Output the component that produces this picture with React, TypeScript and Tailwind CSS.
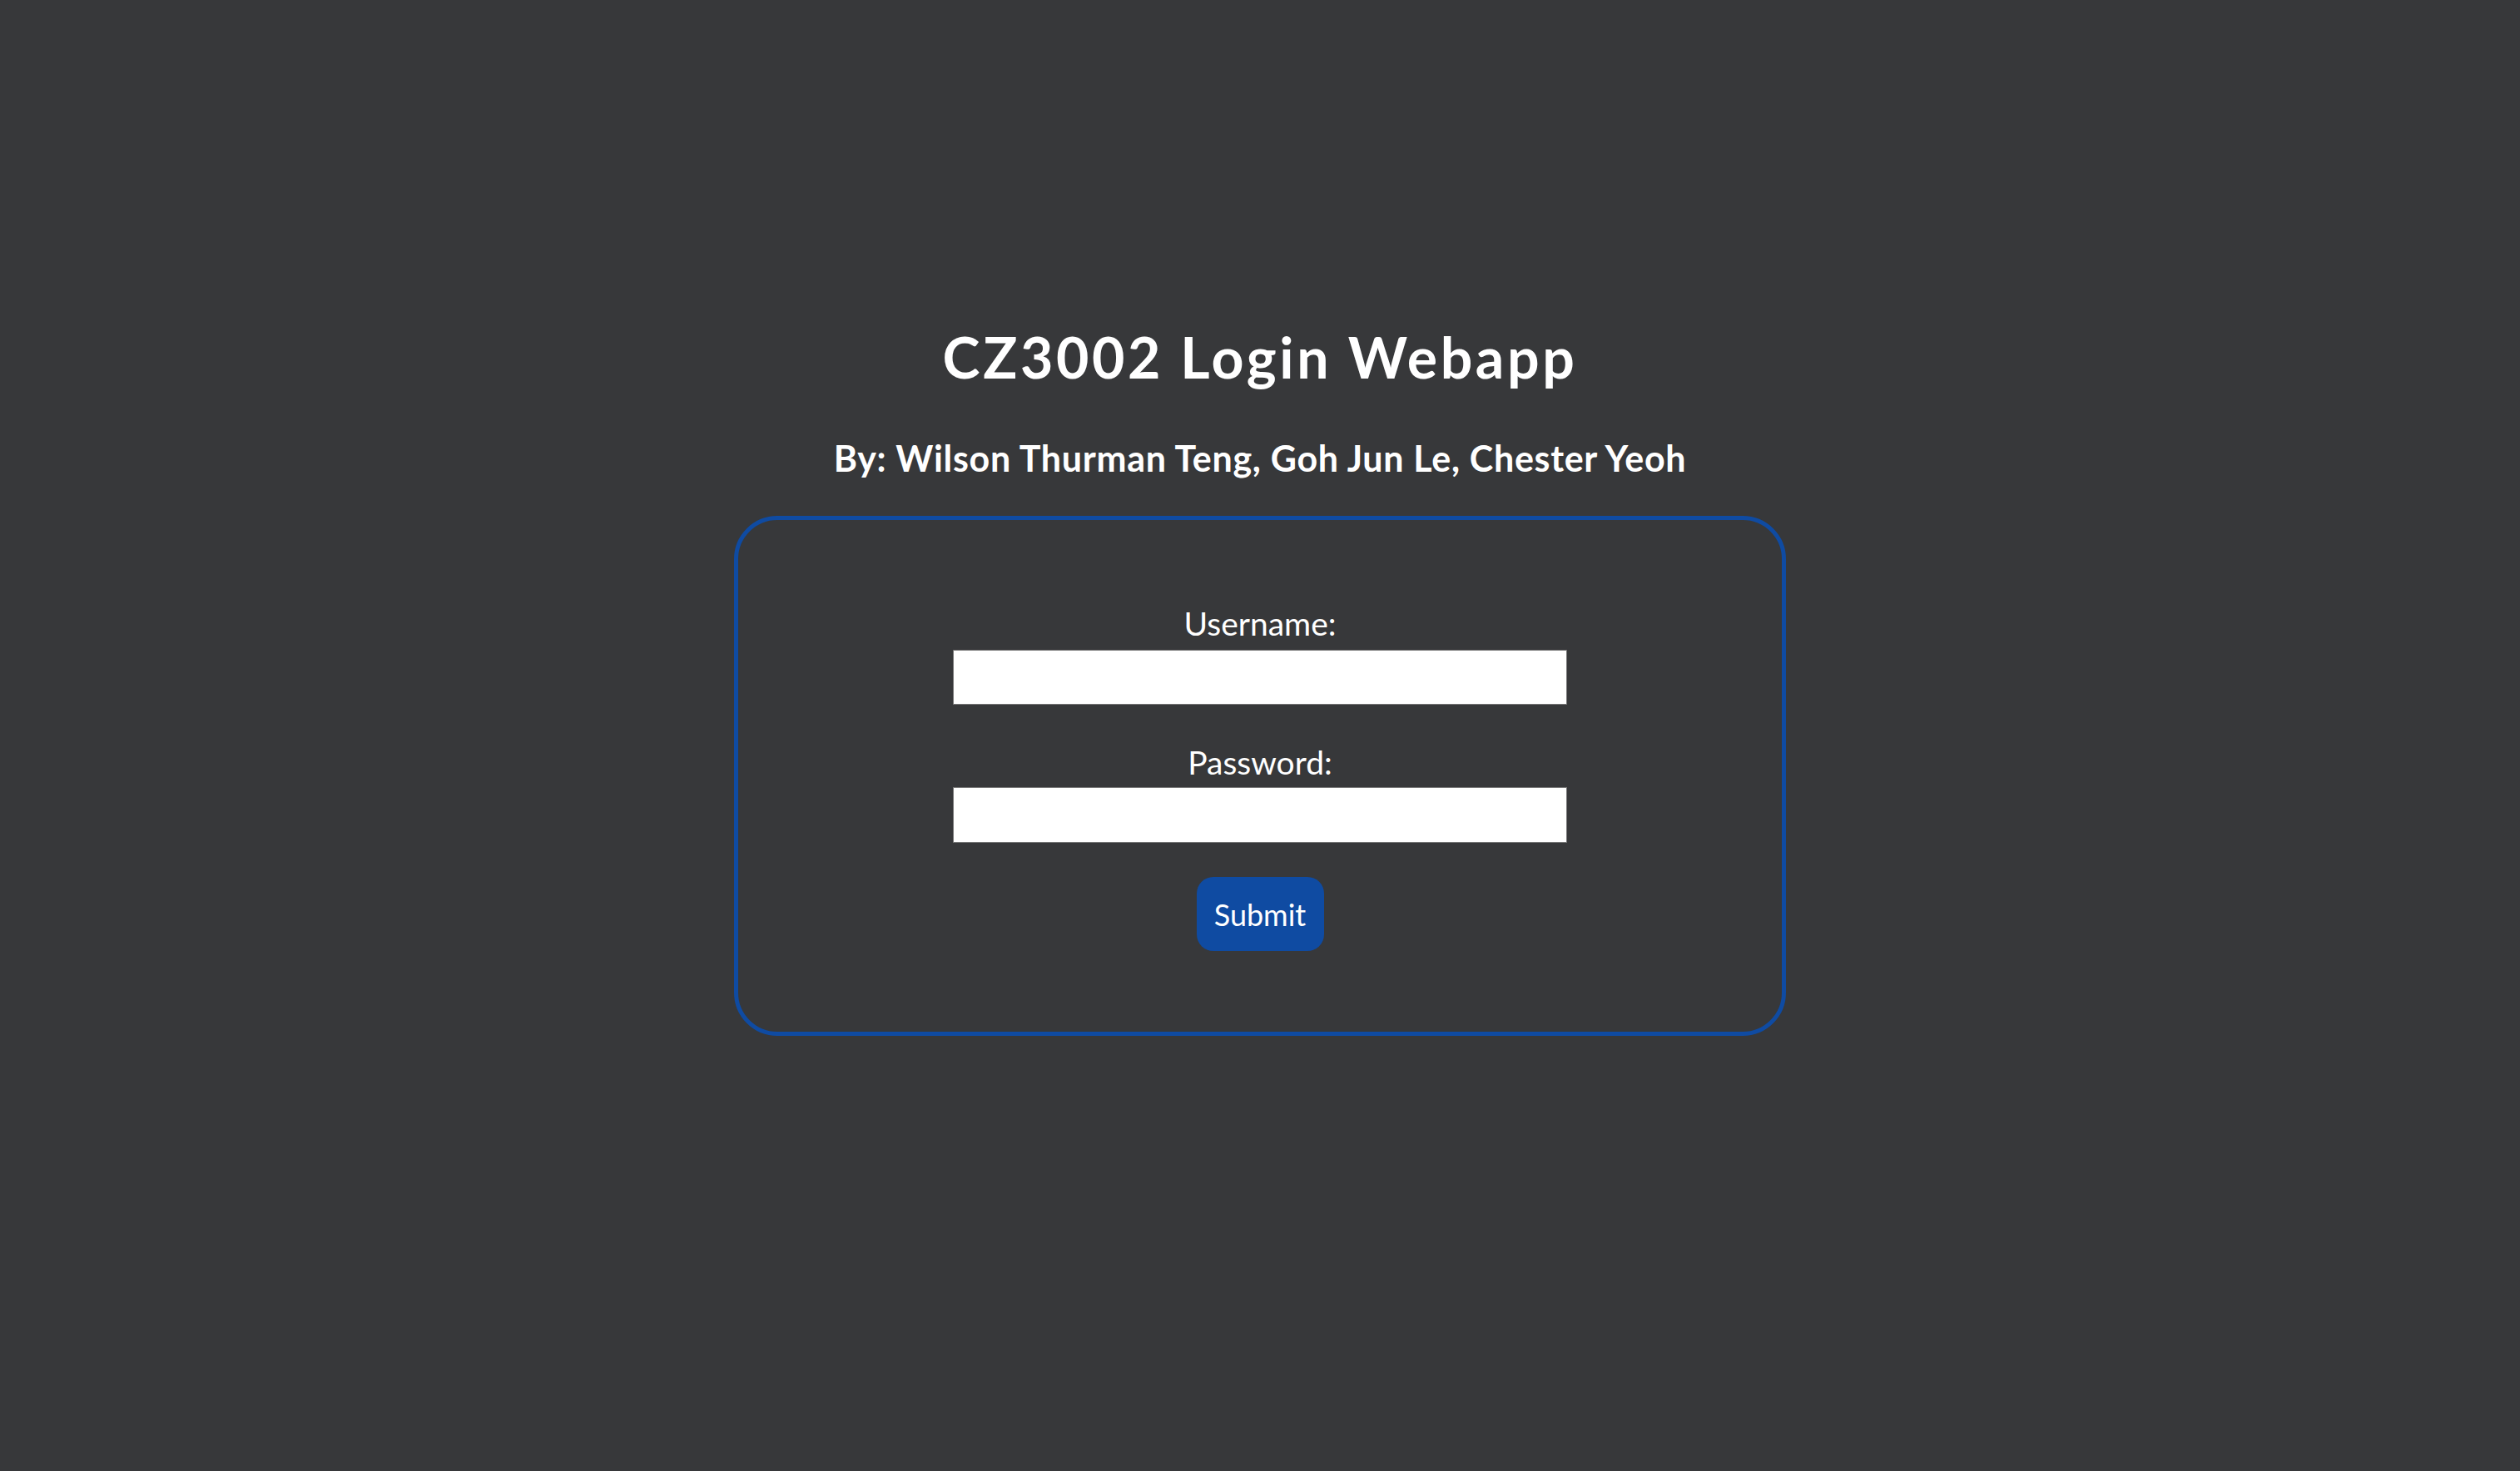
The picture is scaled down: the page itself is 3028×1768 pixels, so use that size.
import React from "react";

export default function App() {
  return (
    <div className="min-h-screen w-full bg-[#37383a] flex flex-col items-center text-white [font-family:'Segoe_UI',Lato,'Noto_Sans',sans-serif]">
      <h1 className="mt-[395px] text-[68px] leading-none font-bold tracking-[3.6px]">CZ3002 Login Webapp</h1>
      <h3 className="mt-[66px] text-[43px] leading-none font-bold tracking-[0.7px]">By: Wilson Thurman Teng, Goh Jun Le, Chester Yeoh</h3>
      <div className="mt-[48px] w-[1264px] border-[5px] border-[#0f4ba2] rounded-[52px] flex flex-col items-center pt-[105px] pb-[97px]">
        <label className="text-[39px] leading-none">Username:</label>
        <input type="text" className="mt-[12px] w-[738px] h-[66px] bg-white border border-[#767676] outline-none" />
        <label className="mt-[50px] text-[39px] leading-none">Password:</label>
        <input type="password" className="mt-[10px] w-[738px] h-[67px] bg-white border border-[#767676] outline-none" />
        <button className="mt-[41px] w-[153px] h-[89px] rounded-[20px] bg-[#0f4ba2] text-white text-[36px] leading-none">Submit</button>
      </div>
    </div>
  );
}
